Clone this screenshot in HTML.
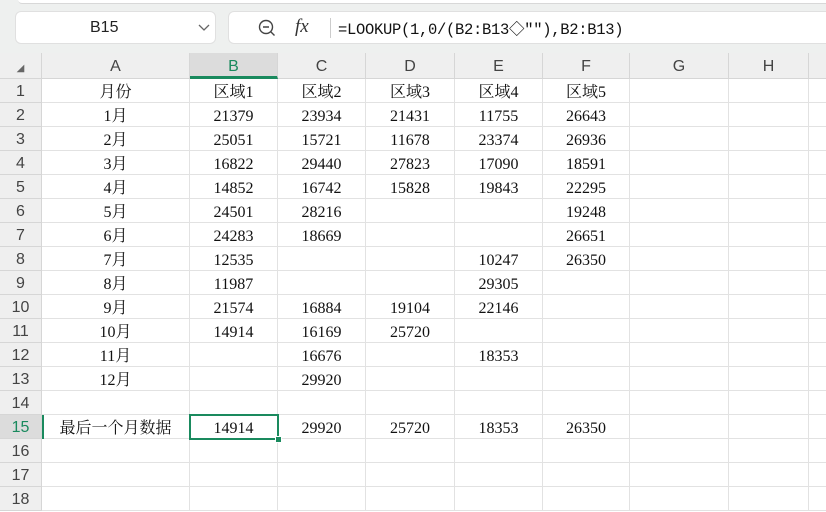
<!DOCTYPE html>
<html><head><meta charset="utf-8"><style>
body{margin:0;width:826px;height:499px;overflow:hidden;background:#fff;font-family:"Liberation Serif","Noto Serif CJK SC",serif;position:relative}
.top{position:absolute;left:0;top:0;width:826px;height:53px;background:#eef0ef}
.top .strip{position:absolute;left:18px;top:0;width:808px;height:3px;background:#fff;border-bottom:1px solid #d8d8d8;border-radius:0 0 0 4px}
.nb{position:absolute;left:15px;top:11px;width:201px;height:33px;background:#fff;border-radius:6px;border:1px solid #e0e0e0;box-sizing:border-box;font:16px "Liberation Sans",sans-serif;color:#222}
.fb{position:absolute;left:228px;top:11px;width:604px;height:33px;background:#fff;border-radius:6px;border:1px solid #e0e0e0;box-sizing:border-box}
.grid{position:absolute;left:0;top:53px}
.c{position:absolute;box-sizing:border-box;border-right:1px solid #e2e2e2;border-bottom:1px solid #e2e2e2;text-align:center;font-size:16px;color:#111;line-height:27px;white-space:nowrap}
.h{background:#efefef;color:#444;font-family:"Liberation Sans",sans-serif;font-size:16px;border-color:#d6d6d6;line-height:25px}
</style></head><body>
<div class="top"><div class="strip"></div>
<div class="nb"><span style="position:absolute;left:74px;top:7px">B15</span>
<svg style="position:absolute;left:182px;top:12px" width="12" height="8"><path d="M1 1 L6 6 L11 1" fill="none" stroke="#666" stroke-width="1.3"/></svg></div>
<div class="fb">
<svg style="position:absolute;left:29px;top:7px" width="18" height="18"><circle cx="8" cy="8" r="6.5" fill="none" stroke="#444" stroke-width="1.4"/><path d="M5 8h6M12.5 12.5l4 4" stroke="#444" stroke-width="1.4"/></svg>
<span style="position:absolute;left:66px;top:4px;font:italic 19px 'Liberation Serif',serif;color:#333">fx</span>
<div style="position:absolute;left:101px;top:6px;width:1px;height:20px;background:#ccc"></div>
<span style="position:absolute;left:109px;top:5px;font:15.5px 'Liberation Mono','Noto Sans CJK SC',monospace;color:#111;letter-spacing:-0.3px">=LOOKUP(1,0/(B2:B13◇″″),B2:B13)</span>
</div></div>
<div class="grid" id="g"></div>
<script>
var cols=[0,42,190,278,366,455,543,630,729,809,900];
var names=["","A","B","C","D","E","F","G","H",""];
var data=[
["月份","区域1","区域2","区域3","区域4","区域5"],
["1月","21379","23934","21431","11755","26643"],
["2月","25051","15721","11678","23374","26936"],
["3月","16822","29440","27823","17090","18591"],
["4月","14852","16742","15828","19843","22295"],
["5月","24501","28216","","","19248"],
["6月","24283","18669","","","26651"],
["7月","12535","","","10247","26350"],
["8月","11987","","","29305",""],
["9月","21574","16884","19104","22146",""],
["10月","14914","16169","25720","",""],
["11月","","16676","","18353",""],
["12月","","29920","","",""],
["","","","","",""],
["最后一个月数据","14914","29920","25720","18353","26350"],
["","","","","",""],["","","","","",""],["","","","","",""]];
var h="";
for(var i=0;i<10;i++){var w=cols[i+1]-cols[i];
var st=i==2?"background:#dcdcdc;color:#1a8a5e;border-bottom:3px solid #1a8a5e;":"";
h+='<div class="c h" style="left:'+cols[i]+'px;top:0;width:'+w+'px;height:26px;line-height:28px;'+st+'">'+(i==0?'<span style="font-size:10px;color:#666">◢</span>':names[i])+'</div>';}
for(var r=0;r<18;r++){var y=26+r*24;
var sel=r==14;
h+='<div class="c h" style="left:0;top:'+y+'px;width:42px;height:24px;'+(sel?'background:#dcdcdc;color:#1a8a5e;':'')+'">'+(r+1)+'</div>';
for(var i=1;i<10;i++){var w=cols[i+1]-cols[i];var t=(i<=6?data[r][i-1]:"");
h+='<div class="c" style="left:'+cols[i]+'px;top:'+y+'px;width:'+w+'px;height:24px">'+t+'</div>';}}
h+='<div style="position:absolute;left:42px;top:362px;width:2px;height:24px;background:#1a8a5e"></div>';
h+='<div style="position:absolute;left:189px;top:361px;width:90px;height:26px;border:2px solid #1a8a5e;box-sizing:border-box"></div>';
h+='<div style="position:absolute;left:275px;top:383px;width:5px;height:5px;background:#1a8a5e;border:1px solid #fff"></div>';
document.getElementById("g").innerHTML=h;
</script>
</body></html>
